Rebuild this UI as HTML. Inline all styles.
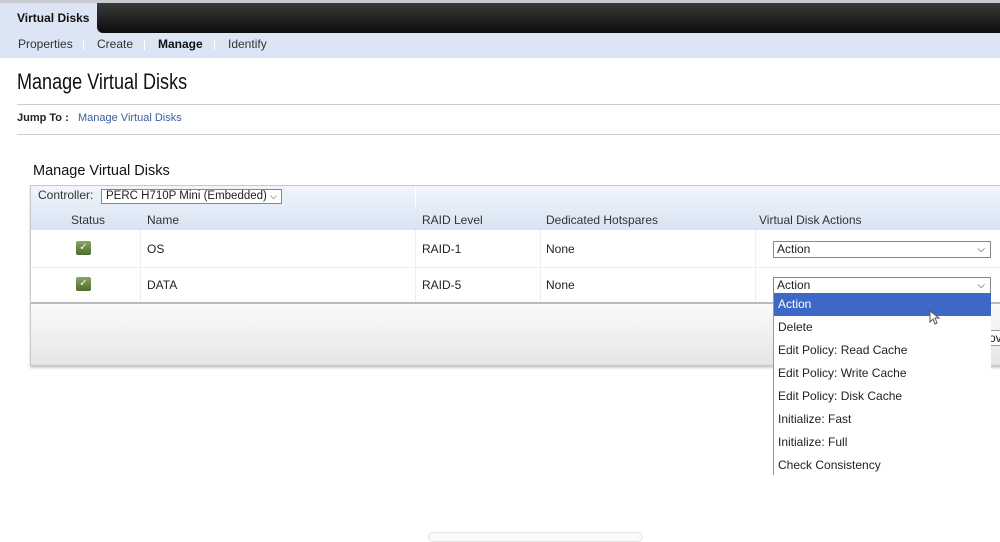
<!DOCTYPE html>
<html><head><style>
*{margin:0;padding:0;box-sizing:border-box}
body{width:1000px;height:538px;overflow:hidden;background:#fff;font-family:"Liberation Sans",Arial,sans-serif;font-size:12px;color:#222;position:relative}
.a{position:absolute;white-space:nowrap}
</style></head><body>
<div class="a" style="left:0;top:0;width:1000px;height:58px;background:#dbe5f4"></div>
<div class="a" style="left:0;top:0;width:1000px;height:3px;background:#c8ccd2"></div>
<div class="a" style="left:97px;top:3px;width:903px;height:30px;background:linear-gradient(#3a3a3a,#0c0c0c);border-bottom-left-radius:6px"></div>
<div class="a" style="left:17px;top:11px;font-weight:bold;font-size:12px;color:#111">Virtual Disks</div>
<div class="a" style="left:18px;top:37px;font-size:12px;color:#333">Properties</div>
<div class="a" style="left:83px;top:40px;width:1px;height:10px;background:#fff"></div>
<div class="a" style="left:97px;top:37px;font-size:12px;color:#333">Create</div>
<div class="a" style="left:144px;top:40px;width:1px;height:10px;background:#fff"></div>
<div class="a" style="left:158px;top:37px;font-size:12px;font-weight:bold;color:#111">Manage</div>
<div class="a" style="left:214px;top:40px;width:1px;height:10px;background:#fff"></div>
<div class="a" style="left:228px;top:37px;font-size:12px;color:#333">Identify</div>
<div class="a" style="left:17px;top:69px;font-size:22px;color:#111;transform:scaleX(.82);transform-origin:left">Manage Virtual Disks</div>
<div class="a" style="left:17px;top:104px;width:983px;height:1px;background:#ccc"></div>
<div class="a" style="left:17px;top:112px;font-size:11px;font-weight:bold">Jump To :</div>
<div class="a" style="left:78px;top:112px;font-size:11px;color:#3b5e9a">Manage Virtual Disks</div>
<div class="a" style="left:17px;top:134px;width:983px;height:1px;background:#ccc"></div>
<div class="a" style="left:33px;top:163px;font-size:14.5px;color:#111">Manage Virtual Disks</div>
<div class="a" style="left:30px;top:185px;width:972px;height:181px;border:1px solid #c8c8c8;border-right:none;box-shadow:0 2px 2px #ccc"></div>
<div class="a" style="left:31px;top:186px;width:969px;height:44px;background:linear-gradient(#f1f5fb,#d8e3f2)"></div>
<div class="a" style="left:415px;top:186px;width:1px;height:22px;background:#fff"></div>
<div class="a" style="left:38px;top:188px;font-size:12px;color:#333">Controller:</div>
<div class="a" style="left:101px;top:189px;width:181px;height:15px;border:1px solid #888;background:#fff;font-size:11.5px;padding-left:4px;line-height:13px">PERC H710P Mini (Embedded)<span style="position:absolute;right:4px;font-size:9px">⌵</span></div>
<div class="a" style="left:71px;top:213px;color:#333">Status</div>
<div class="a" style="left:147px;top:213px;color:#333">Name</div>
<div class="a" style="left:422px;top:213px;color:#333">RAID Level</div>
<div class="a" style="left:546px;top:213px;color:#333">Dedicated Hotspares</div>
<div class="a" style="left:759px;top:213px;color:#333">Virtual Disk Actions</div>
<div class="a" style="left:31px;top:267px;width:969px;height:1px;background:#eee"></div>
<div class="a" style="left:140px;top:230px;width:1px;height:73px;background:#eee"></div>
<div class="a" style="left:415px;top:230px;width:1px;height:73px;background:#eee"></div>
<div class="a" style="left:540px;top:230px;width:1px;height:73px;background:#eee"></div>
<div class="a" style="left:755px;top:230px;width:1px;height:73px;background:#eee"></div>
<div class="a" style="left:76px;top:241px;width:15px;height:14px;border-radius:2px;background:linear-gradient(#8aa664,#4e6b2e);color:#fff;font-size:10px;text-align:center;line-height:14px">✓</div>
<div class="a" style="left:76px;top:277px;width:15px;height:14px;border-radius:2px;background:linear-gradient(#8aa664,#4e6b2e);color:#fff;font-size:10px;text-align:center;line-height:14px">✓</div>
<div class="a" style="left:147px;top:242px">OS</div>
<div class="a" style="left:422px;top:242px">RAID-1</div>
<div class="a" style="left:546px;top:242px">None</div>
<div class="a" style="left:147px;top:278px">DATA</div>
<div class="a" style="left:422px;top:278px">RAID-5</div>
<div class="a" style="left:546px;top:278px">None</div>
<div class="a" style="left:31px;top:302px;width:969px;height:2px;background:#bbb"></div>
<div class="a" style="left:31px;top:304px;width:969px;height:61px;background:linear-gradient(#fafafa,#e6e6e6)"></div>
<div class="a" style="left:985px;top:330px;width:15px;height:16px;border:1px solid #999;border-right:none;background:#fff;font-size:12px;padding-left:3px">ov</div>
<div class="a" style="left:773px;top:241px;width:218px;height:17px;border:1px solid #888;background:#fff;padding-left:3px;line-height:15px">Action<span style="position:absolute;right:5px;font-size:10px">⌵</span></div>
<div class="a" style="left:773px;top:277px;width:218px;height:17px;border:1px solid #888;background:#fff;padding-left:3px;line-height:15px">Action<span style="position:absolute;right:5px;font-size:10px">⌵</span></div>
<div class="a" style="left:773px;top:293px;width:218px;height:182px;background:#fff;border-left:1px solid #999;line-height:23px">
<div style="background:#3d68c6;color:#fff;padding-left:4px">Action</div>
<div style="padding-left:4px">Delete</div>
<div style="padding-left:4px">Edit Policy: Read Cache</div>
<div style="padding-left:4px">Edit Policy: Write Cache</div>
<div style="padding-left:4px">Edit Policy: Disk Cache</div>
<div style="padding-left:4px">Initialize: Fast</div>
<div style="padding-left:4px">Initialize: Full</div>
<div style="padding-left:4px">Check Consistency</div>
</div>
<svg class="a" style="left:929px;top:310px" width="12" height="16"><path d="M1 1 L1 12 L4 9 L6 14 L8 13 L6 8 L10 8 Z" fill="#fff" stroke="#555" stroke-width="1"/></svg>
<div class="a" style="left:428px;top:532px;width:215px;height:10px;border:1px solid #e4e4e4;border-radius:5px;background:#fafafa"></div>
</body></html>
